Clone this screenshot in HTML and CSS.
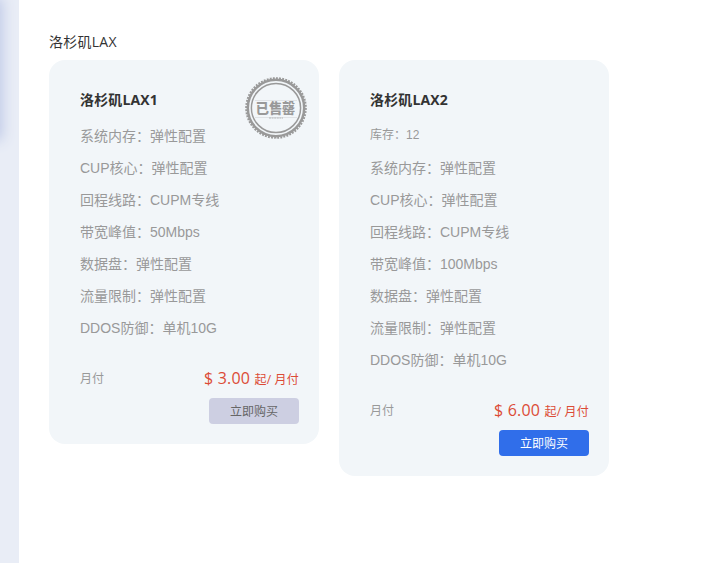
FILE: index.html
```html
<!DOCTYPE html>
<html lang="zh-CN">
<head>
<meta charset="utf-8">
<title>洛杉矶LAX</title>
<link rel="stylesheet" href="styles.css">
</head>
<body>
<div class="page">
  <aside class="side"><div class="side-card"></div></aside>
  <main class="content">
    <h1 class="region">洛杉矶LAX</h1>
    <div class="cards">
      <section class="card">
        <svg class="seal" viewBox="0 0 64 64" width="64" height="64">
          <circle cx="32" cy="32" r="29.8" class="teeth" pathLength="240"/>
          <circle cx="32" cy="32" r="28.2" class="ring"/>
          <circle cx="32" cy="32" r="24.6" class="ring-thin"/>
          <path d="M11 24.5H53M11 41.5H53" class="rule"/>
          <path d="M25 42H39" class="caption"/>
          <text x="31.5" y="36.8" class="seal-text">已售罄</text>
        </svg>
        <h2 class="name">洛杉矶LAX1</h2>
        <ul class="specs">
          <li>系统内存：弹性配置</li>
          <li>CUP核心：弹性配置</li>
          <li>回程线路：CUPM专线</li>
          <li>带宽峰值：50Mbps</li>
          <li>数据盘：弹性配置</li>
          <li>流量限制：弹性配置</li>
          <li>DDOS防御：单机10G</li>
        </ul>
        <div class="billing"><span class="cycle">月付</span><span class="price">$ 3.00 <small>起/ 月付</small></span></div>
        <button class="buy sold-out">立即购买</button>
      </section>
      <section class="card">
        <h2 class="name">洛杉矶LAX2</h2>
        <p class="stock">库存：12</p>
        <ul class="specs">
          <li>系统内存：弹性配置</li>
          <li>CUP核心：弹性配置</li>
          <li>回程线路：CUPM专线</li>
          <li>带宽峰值：100Mbps</li>
          <li>数据盘：弹性配置</li>
          <li>流量限制：弹性配置</li>
          <li>DDOS防御：单机10G</li>
        </ul>
        <div class="billing"><span class="cycle">月付</span><span class="price">$ 6.00 <small>起/ 月付</small></span></div>
        <button class="buy">立即购买</button>
      </section>
    </div>
  </main>
</div>
</body>
</html>
```
FILE: styles.css
```css
* { box-sizing: border-box; margin: 0; padding: 0; }
body {
  background: #fff;
  font-family: "Liberation Sans", "Noto Sans CJK SC", sans-serif;
  color: #333;
}
.page { display: flex; height: 563px; overflow: hidden; }
.side { width: 19px; flex: none; background: #e9edf6; overflow: hidden; }
.side-card {
  width: 40px;
  height: 138px;
  margin-left: -40px;
  box-shadow: 0 0 14px 2px #bcc7e6;
}
.content { padding: 32px 0 0 30px; }
.region {
  font: 400 14px/20px "Open Sans", "Noto Sans CJK SC", sans-serif;
  letter-spacing: .25px;
  margin-bottom: 8px;
}
.cards { display: flex; align-items: flex-start; gap: 20px; }
.card {
  position: relative;
  width: 270px;
  padding: 30px 20px 20px 31px;
  border-radius: 16px;
  background: #f2f6f9;
  display: flex;
  flex-direction: column;
}
.name {
  font: 700 14px/20px "Open Sans", "Noto Sans CJK SC", sans-serif;
  letter-spacing: .15px;
  margin-bottom: 10px;
}
.stock { font-size: 12px; line-height: 30px; height: 32px; color: #999; }
.specs { list-style: none; font-size: 14px; line-height: 32px; color: #999; }
.specs li { height: 32px; }
.billing {
  display: flex;
  justify-content: space-between;
  align-items: flex-start;
  height: 24px;
  margin: 22px 0 8px;
}
.cycle { font-size: 12px; line-height: 27px; color: #999; }
.price {
  font: 400 16px/24px "Open Sans", "Noto Sans CJK SC", sans-serif;
  letter-spacing: .2px;
  color: #dc4b36;
}
.price small { font-size: 12px; }
.buy {
  align-self: flex-end;
  width: 90px;
  height: 26px;
  border: 0;
  border-radius: 4px;
  background: #306eea;
  color: #fff;
  font: 400 12px/26px "Noto Sans CJK SC", sans-serif;
}
.sold-out { background: #cdcfe2; color: #666; }
.seal { position: absolute; left: 194.7px; top: 16px; }
.teeth { fill: none; stroke: #999; stroke-width: 2; stroke-dasharray: 2.4 1.6; }
.ring { fill: none; stroke: #999; stroke-width: 2.5; }
.ring-thin { fill: none; stroke: #999; stroke-width: 1.5; }
.rule { stroke: #d3d6d8; stroke-width: .6; }
.caption { stroke: #b5b7b9; stroke-width: 1; stroke-dasharray: 2 .6; }
.seal-text {
  font: 900 13.2px "Noto Sans CJK SC", sans-serif;
  fill: #999;
  text-anchor: middle;
}
```
